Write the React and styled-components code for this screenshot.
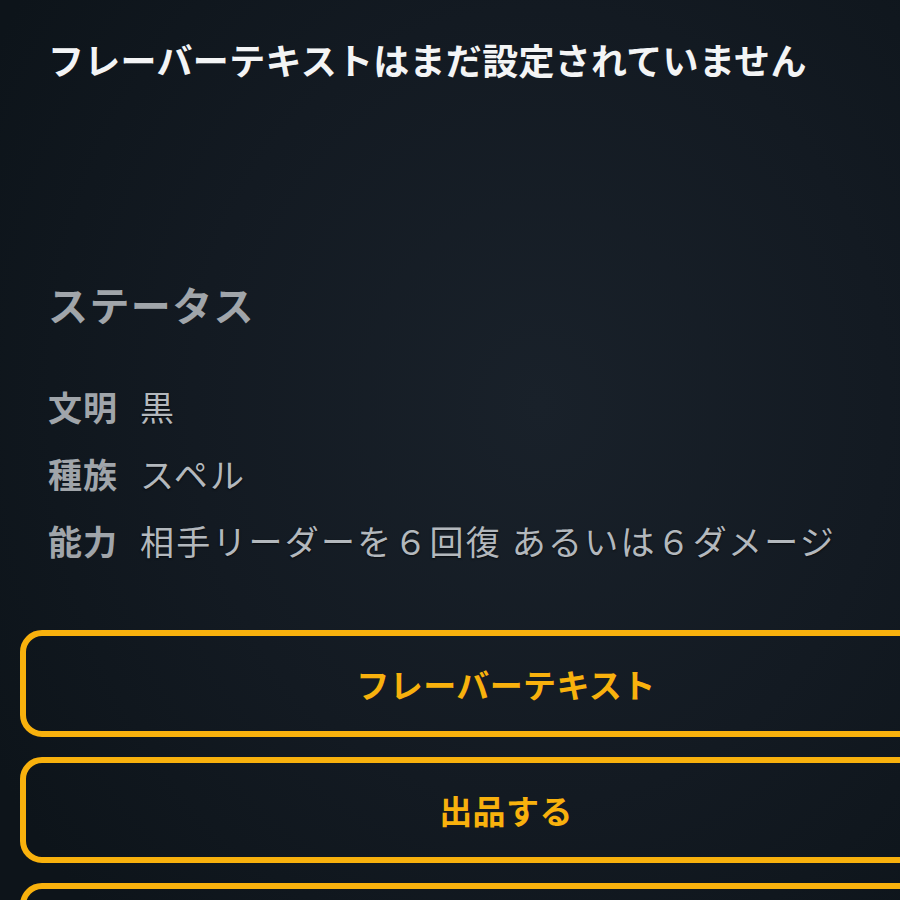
import styled, {createGlobalStyle} from 'styled-components';

const GlobalStyle = createGlobalStyle`
  html, body {
    margin: 0;
    padding: 0;
    background: #111820;
    overflow: hidden;
  }
  body {
    font-family: "Noto Sans CJK JP", "Noto Sans", sans-serif;
  }
`;

const Page = styled.div`
  width: 900px;
  height: 900px;
  overflow: hidden;
  background: radial-gradient(ellipse 70% 80% at 60% 45%, #19212a 0%, #131a22 55%, #0d141a 100%);
`;

const Section = styled.div`
  padding: 0 0 0 48px;
`;

const Flavor = styled.h2`
  margin: 0;
  padding-top: 34px;
  font-size: 36px;
  line-height: 50px;
  font-weight: 700;
  color: #f3f4f5;
  letter-spacing: 0.3px;
  white-space: nowrap;
`;

const Heading = styled.h3`
  margin: 192px 0 0;
  font-size: 40px;
  line-height: 56px;
  font-weight: 700;
  color: #a0a5aa;
  letter-spacing: 1.4px;
`;

const StatusList = styled.dl`
  margin: 50px 0 0;
  display: flex;
  flex-direction: column;
  gap: 19px;
`;

const Row = styled.div`
  display: flex;
  align-items: center;
  gap: 22px;
  height: 48px;
  font-size: 34px;
  white-space: nowrap;
`;

const Label = styled.dt`
  font-weight: 700;
  color: #a0a5aa;
  letter-spacing: 1px;
`;

const Value = styled.dd`
  margin: 0;
  font-weight: 400;
  color: #b3b8bd;
  letter-spacing: 2.2px;
  text-shadow: 0 1px 2px rgba(0, 0, 0, 0.6);
`;

const Actions = styled.div`
  margin: 66px 0 0 20px;
  display: flex;
  flex-direction: column;
  gap: 20px;
`;

const ActionButton = styled.button`
  box-sizing: border-box;
  width: 972px;
  height: ${p => p.$h || 107}px;
  flex-shrink: 0;
  background: transparent;
  border: 6px solid #f8b10d;
  border-radius: 22px;
  color: #f8b10d;
  font-family: "Noto Sans CJK JP", sans-serif;
  font-size: 33px;
  font-weight: 700;
  letter-spacing: 0.4px;
  padding: 0;
  cursor: pointer;
`;

const rows = [
  ['文明', '黒'],
  ['種族', 'スペル'],
  ['能力', '相手リーダーを６回復 あるいは６ダメージ'],
];

export default function App() {
  return (
    <Page>
      <GlobalStyle />
      <Section>
        <Flavor>フレーバーテキストはまだ設定されていません</Flavor>
        <Heading>ステータス</Heading>
        <StatusList>
          {rows.map(([k, v]) => (
            <Row key={k}>
              <Label>{k}</Label>
              <Value>{v}</Value>
            </Row>
          ))}
        </StatusList>
      </Section>
      <Actions>
        <ActionButton>フレーバーテキスト</ActionButton>
        <ActionButton $h={106}>出品する</ActionButton>
        <ActionButton aria-label="出品履歴" />
      </Actions>
    </Page>
  );
}
